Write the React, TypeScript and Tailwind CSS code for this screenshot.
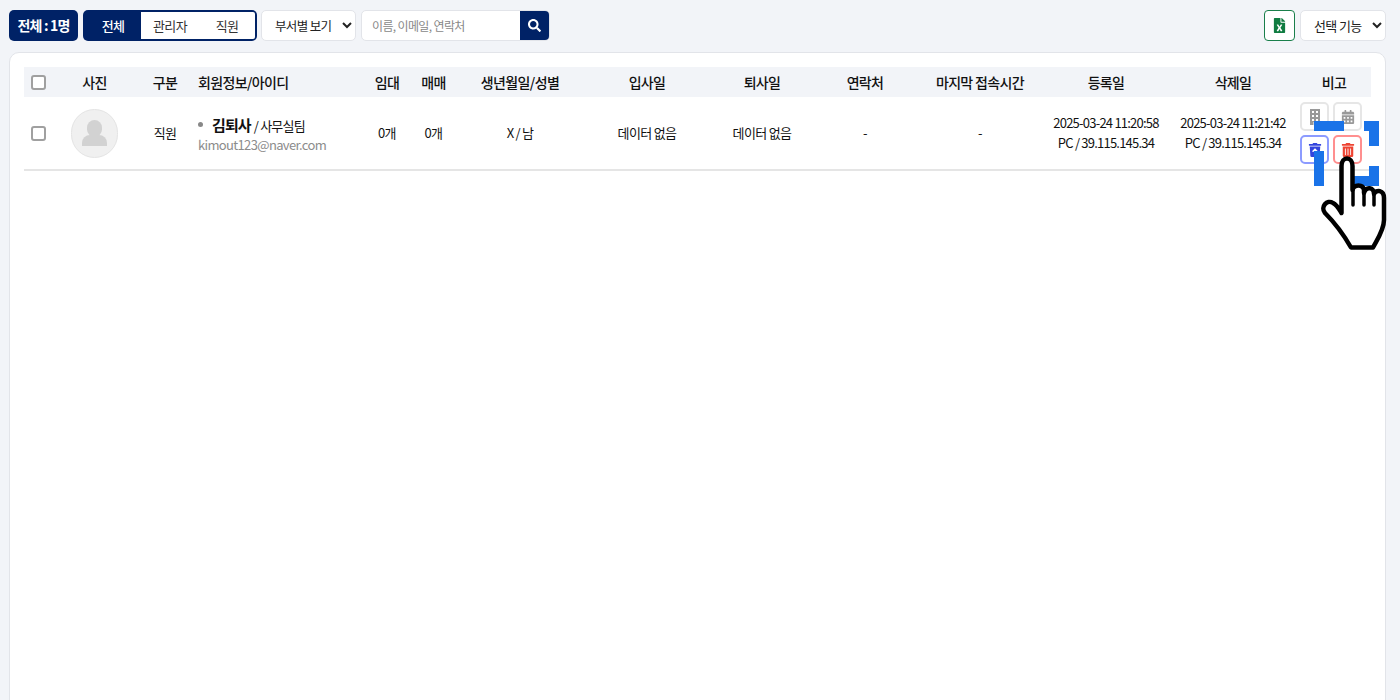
import React from "react";
import { FaCalendarAlt, FaFileExcel, FaSearch, FaTrashAlt, FaTrashRestore } from "react-icons/fa";

const font = { fontFamily: '"Noto Sans CJK KR", "Noto Sans", sans-serif' };
const cols = "grid grid-cols-[28px_85px_56px_171px_46px_47px_126px_128px_102px_104px_126px_126px_128px_74px]";
const heads = ["사진", "구분", "회원정보/아이디", "임대", "매매", "생년월일/성별", "입사일", "퇴사일", "연락처", "마지막 접속시간", "등록일", "삭제일", "비고"];

function Check() {
  return <span className="block w-[15px] h-[15px] ml-[7px] rounded-[3px] border-2 border-[#a0a0a0] bg-white" />;
}

function Building() {
  return (
    <svg viewBox="0 0 10 16" className="w-[10px] h-[16px]" fill="#999">
      <path fillRule="evenodd" d="M0 0h10v16H6.5v-3h-3v3H0z M2 2v2h2V2z M6 2v2h2V2z M2 6v2h2V6z M6 6v2h2V6z M2 10v2h2v-2z M6 10v2h2v-2z" />
    </svg>
  );
}

function Hand() {
  return (
    <svg viewBox="0 0 120 170" className="absolute left-[1280px] top-[90px] w-[120px] h-[170px]">
      <path
        d="M61.5 76 C61.5 66 72.5 66 72.5 76 L72.5 100 C74 94 83 94 84 100 L84 103 C86 96 94 97 94 104 C96 99 104 100 104 108 L104 130 C104 140 97 150 93 157.5 L71 157.5 C65 147 55 133 45 123 C40 117 47 109 53 113 C57 115 59 119 61.5 123 Z"
        fill="#fff"
        stroke="#000"
        strokeWidth="4.5"
        strokeLinejoin="round"
      />
      <path d="M73 100 L73 115 M84 102 L84 115 M94 104 L94 115" stroke="#000" strokeWidth="3.5" strokeLinecap="round" fill="none" />
    </svg>
  );
}

export default function App() {
  return (
    <div className="relative w-[1400px] h-[700px] overflow-hidden bg-[#f2f4f8] text-[#111] tracking-[-0.04em]" style={font}>
      <div className="flex items-center h-[31px] absolute left-[9px] right-[14px] top-[10px]">
        <div className="w-[69px] h-[31px] rounded-[5px] bg-[#002266] text-white text-[14px] font-bold tracking-[-0.06em] flex items-center justify-center">전체 : 1명</div>
        <div className="ml-[5px] w-[174px] h-[31px] rounded-[5px] bg-[#002266] p-[2px] flex text-[13px]">
          <div className="w-[56px] text-white font-medium flex items-center justify-center">전체</div>
          <div className="flex-1 bg-white flex items-center rounded-r-[2px] text-[#333]">
            <span className="w-[58px] text-center">관리자</span>
            <span className="w-[56px] text-center">직원</span>
          </div>
        </div>
        <select className="ml-[4px] w-[95px] h-[31px] rounded-[5px] border border-[#e2e4e9] bg-white text-[12.5px] pl-[9px] text-[#222]" style={font}>
          <option>부서별 보기</option>
        </select>
        <div className="ml-[5px] w-[189px] h-[31px] flex rounded-[5px] overflow-hidden border border-[#e2e4e9] bg-white">
          <span className="flex-1 pl-[10px] text-[12px] text-[#888] flex items-center">이름, 이메일, 연락처</span>
          <span className="w-[29px] bg-[#002266] text-white flex items-center justify-center"><FaSearch size={13} /></span>
        </div>
        <div className="ml-auto w-[31px] h-[31px] rounded-[4px] border border-[#1a7f4b] bg-white flex items-center justify-center text-[#107c41]"><FaFileExcel size={15} /></div>
        <select className="ml-[5px] w-[86px] h-[31px] rounded-[5px] border border-[#e2e4e9] bg-white text-[13px] pl-[9px] text-[#222]" style={font}>
          <option>선택 기능</option>
        </select>
      </div>

      <div className="absolute left-[9px] top-[52px] w-[1377px] h-[680px] rounded-[10px] border border-[#e2e4e9] bg-white px-[14px] pt-[14px]">
        <div className={`${cols} h-[30px] items-center bg-[#f2f4f8] text-[14px] font-medium text-center`}>
          <Check />
          {heads.map((h, i) => (
            <div key={h} className={i === 2 ? "text-left pl-[5px]" : ""}>{h}</div>
          ))}
        </div>
        <div className={`${cols} h-[74px] items-center border-b-2 border-[#e5e5e5] text-[13px] text-center`}>
          <Check />
          <div className="flex justify-center">
            <div className="w-[47px] h-[49px] rounded-full bg-[#f0f0f0] border border-[#e4e4e4] flex flex-col items-center justify-center">
              <span className="w-[15px] h-[17px] rounded-full bg-[#d2d2d2]" />
              <span className="w-[25px] h-[11px] -mt-[2px] rounded-t-[8px] bg-[#d2d2d2]" />
            </div>
          </div>
          <div>직원</div>
          <div className="text-left pl-[5px] pt-[5px]">
            <div className="flex items-center h-[18px]">
              <span className="w-[5px] h-[5px] rounded-full bg-[#888] mr-[9px] -mt-[3px]" />
              <span className="text-[15px] font-bold tracking-[-0.06em]">김퇴사</span>
              <span className="text-[13px] ml-[3px] tracking-[-0.06em]">/ 사무실팀</span>
            </div>
            <div className="text-[13px] text-[#8c8c8c] leading-[20px] tracking-[-0.05em]">kimout123@naver.com</div>
          </div>
          <div>0개</div>
          <div>0개</div>
          <div className="tracking-[-0.06em]">X / 남</div>
          <div>데이터 없음</div>
          <div>데이터 없음</div>
          <div>-</div>
          <div>-</div>
          <div className="leading-[20px] tracking-[-0.06em]">2025-03-24 11:20:58<br />PC / 39.115.145.34</div>
          <div className="leading-[20px] tracking-[-0.06em]">2025-03-24 11:21:42<br />PC / 39.115.145.34</div>
          <div className="grid grid-cols-[29px_29px] gap-x-[4px] gap-y-[4px] justify-center pr-[6px]">
            <span className="h-[29px] rounded-[5px] border-2 border-[#e6e6e6] flex items-center justify-center"><Building /></span>
            <span className="h-[29px] rounded-[5px] border-2 border-[#e6e6e6] flex items-center justify-center text-[#999]"><FaCalendarAlt size={14} /></span>
            <span className="h-[29px] rounded-[5px] border-2 border-[#8c9bff] flex items-center justify-center text-[#3344dd]"><FaTrashRestore size={14} /></span>
            <span className="h-[29px] rounded-[5px] border-2 border-[#ff8f8f] flex items-center justify-center text-[#ee4433]"><FaTrashAlt size={14} /></span>
          </div>
        </div>
      </div>

      <span className="absolute left-[1314px] top-[121px] w-[30px] h-[10px] bg-[#1a73e8]" />
      <span className="absolute left-[1364px] top-[121px] w-[15px] h-[10px] bg-[#1a73e8]" />
      <span className="absolute left-[1369px] top-[121px] w-[10px] h-[25px] bg-[#1a73e8]" />
      <span className="absolute left-[1314px] top-[151px] w-[10px] h-[35px] bg-[#1a73e8]" />
      <span className="absolute left-[1354px] top-[176px] w-[25px] h-[10px] bg-[#1a73e8]" />
      <span className="absolute left-[1369px] top-[166px] w-[10px] h-[20px] bg-[#1a73e8]" />
      <Hand />
    </div>
  );
}
